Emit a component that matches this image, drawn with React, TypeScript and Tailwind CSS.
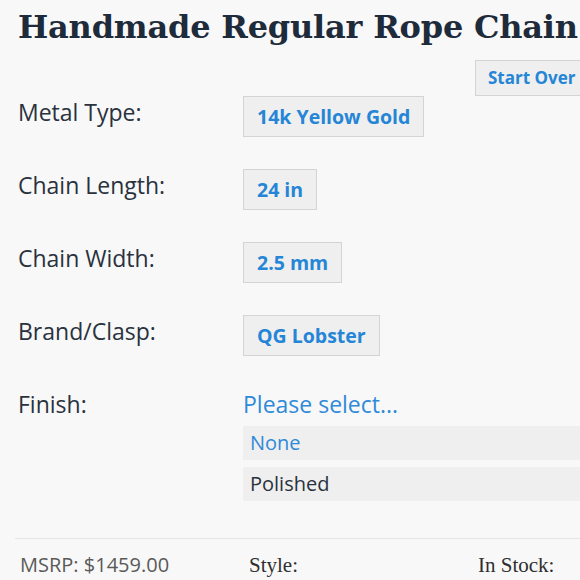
const sans = { fontFamily: '"Open Sans", "Noto Sans", sans-serif' }

const options = [
  { label: 'Metal Type:', value: '14k Yellow Gold' },
  { label: 'Chain Length:', value: '24 in' },
  { label: 'Chain Width:', value: '2.5 mm' },
  { label: 'Brand/Clasp:', value: 'QG Lobster' },
]

function Choice({ children }: { children: React.ReactNode }) {
  return (
    <div className="h-[41px] px-[13px] flex items-center bg-[#efefef] border-[1.5px] border-[#d4d4d4] text-[19.5px] font-bold text-[#2585d6] whitespace-nowrap">
      {children}
    </div>
  )
}

export default function App() {
  return (
    <div className="w-[580px] h-[580px] overflow-hidden bg-[#f8f8f8]" style={sans}>
      <div className="w-[660px] pl-[18px]">
        <h1
          className="pt-[7px] text-[32px] leading-[40px] font-bold tracking-[-0.2px] text-[#1e2b3b] whitespace-nowrap"
          style={{ fontFamily: '"DejaVu Serif", serif' }}
        >
          Handmade Regular Rope Chain
        </h1>

        <div className="mt-[13px] pl-[457px] flex">
          <div className="h-[36px] px-[12px] flex items-center bg-[#efefef] border border-[#d4d4d4] text-[17px] font-bold text-[#2585d6] whitespace-nowrap">
            Start Over
          </div>
        </div>

        <div className="flex flex-col gap-[32px]">
          {options.map((o) => (
            <div key={o.label} className="flex items-start">
              <div className="w-[225px] text-[23px] leading-[32px] text-[#29323d]">{o.label}</div>
              <Choice>{o.value}</Choice>
            </div>
          ))}

          <div className="flex items-start">
            <div className="w-[225px] text-[23px] leading-[32px] text-[#29323d]">Finish:</div>
            <div className="flex-1">
              <div className="text-[23px] leading-[32px] text-[#2f8ad8]">Please select...</div>
              <div className="mt-[6px] flex flex-col gap-[7px]">
                <div className="h-[34px] pl-[7px] flex items-center bg-[#efefef] text-[20px] text-[#2f8ad8]">None</div>
                <div className="h-[34px] pl-[7px] flex items-center bg-[#efefef] text-[20px] text-[#29323d]">Polished</div>
              </div>
            </div>
          </div>
        </div>

        <div className="mt-[37px] -ml-[3px] h-px bg-[#e6e6e6]" />

        <div className="mt-[12px] flex items-start text-[20px] leading-[28px]">
          <div className="w-[231px] pl-[2px] text-[#5a5a5a]">MSRP: $1459.00</div>
          <div className="w-[229px] text-[21px] text-[#2f2f2f]" style={{ fontFamily: '"Liberation Serif", serif' }}>
            Style:
          </div>
          <div className="text-[21px] text-[#2f2f2f]" style={{ fontFamily: '"Liberation Serif", serif' }}>
            In Stock:
          </div>
        </div>
      </div>
    </div>
  )
}
